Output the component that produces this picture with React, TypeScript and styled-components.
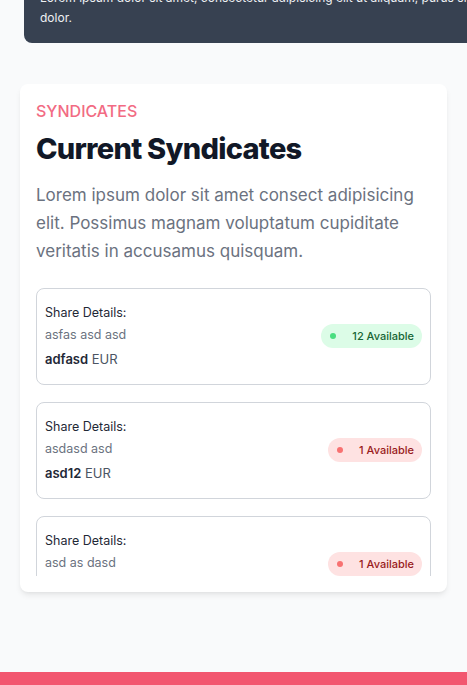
import React from "react";
import styled, { createGlobalStyle } from "styled-components";

const GlobalStyle = createGlobalStyle`
  html, body {
    margin: 0;
    padding: 0;
    background: #f9fafb;
    font-family: Inter, "Noto Sans", sans-serif;
    overflow: hidden;
  }
  * { box-sizing: border-box; }
`;

const Page = styled.div`
  width: 467px;
  min-height: 685px;
  overflow: hidden;
  display: flex;
  flex-direction: column;
`;

const HeroWrap = styled.div`
  padding-left: 24px;
  margin-top: -28px;
  overflow: hidden;
`;

const HeroBox = styled.div`
  width: 552px;
  background: #374151;
  border-radius: 8px;
  padding: 16px 16px 15px 16px;
  color: #eef0f3;
  font-size: 12px;
  line-height: 20px;
`;

const Section = styled.section`
  padding: 41px 20px 80px 20px;
`;

const Card = styled.div`
  background: #ffffff;
  border-radius: 8px;
  box-shadow: 0 4px 6px -1px rgba(0, 0, 0, 0.08), 0 2px 4px -2px rgba(0, 0, 0, 0.06);
  padding: 15px 16px 16px 16px;
`;

const Eyebrow = styled.div`
  color: #f26b83;
  font-size: 16px;
  line-height: 24px;
  font-weight: 500;
  text-transform: uppercase;
`;

const Title = styled.h2`
  margin: 8px 0 0 0;
  color: #111827;
  font-size: 29px;
  line-height: 36px;
  font-weight: 800;
  letter-spacing: -0.025em;
`;

const Lead = styled.p`
  margin: 14px 0 0 0;
  color: #6b7280;
  font-size: 17px;
  line-height: 28px;
`;

const List = styled.div`
  margin-top: 23px;
  height: 288px;
  overflow: hidden;
  display: flex;
  flex-direction: column;
  gap: 17px;
`;

const Item = styled.div`
  flex-shrink: 0;
  border: 1px solid #d1d5db;
  border-radius: 8px;
  padding: 13px 8px 14px 8px;
  display: flex;
  align-items: center;
  justify-content: space-between;
`;

const Details = styled.div`
  display: flex;
  flex-direction: column;
  font-size: 12.5px;
  line-height: 22px;
`;

const Label = styled.div`
  color: #1f2937;
`;

const Sub = styled.div`
  color: #6b7280;
`;

const Price = styled.div`
  margin-top: 2px;
  color: #4b5563;
  font-size: 13px;
`;

const Amount = styled.span`
  color: #1f2937;
  font-weight: 600;
`;

const Badge = styled.span<{ $tone: "green" | "red" }>`
  display: inline-flex;
  align-items: center;
  gap: 16px;
  height: 24px;
  padding: 0 8px 0 9px;
  border-radius: 9999px;
  font-size: 11px;
  font-weight: 500;
  background: ${(p) => (p.$tone === "green" ? "#dcfce7" : "#fee2e2")};
  color: ${(p) => (p.$tone === "green" ? "#166534" : "#991b1b")};
`;

const Dot = styled.span<{ $tone: "green" | "red" }>`
  width: 6px;
  height: 6px;
  border-radius: 50%;
  background: ${(p) => (p.$tone === "green" ? "#4ade80" : "#f87171")};
`;

const Footer = styled.div`
  height: 40px;
  background: #f2566f;
`;

type Share = { sub: string; amount: string; available: number; tone: "green" | "red" };

const shares: Share[] = [
  { sub: "asfas asd asd", amount: "adfasd", available: 12, tone: "green" },
  { sub: "asdasd asd", amount: "asd12", available: 1, tone: "red" },
  { sub: "asd as dasd", amount: "asd", available: 1, tone: "red" },
];

export default function App() {
  return (
    <Page>
      <GlobalStyle />
      <HeroWrap>
        <HeroBox>
          Lorem ipsum dolor sit amet, consectetur adipisicing elit ut aliquam, purus sit amet lectus dolor.
        </HeroBox>
      </HeroWrap>
      <Section>
        <Card>
          <Eyebrow>Syndicates</Eyebrow>
          <Title>Current Syndicates</Title>
          <Lead>
            Lorem ipsum dolor sit amet consect adipisicing elit. Possimus magnam voluptatum cupiditate
            veritatis in accusamus quisquam.
          </Lead>
          <List>
            {shares.map((s, i) => (
              <Item key={i}>
                <Details>
                  <Label>Share Details:</Label>
                  <Sub>{s.sub}</Sub>
                  <Price>
                    <Amount>{s.amount}</Amount> EUR
                  </Price>
                </Details>
                <Badge $tone={s.tone}>
                  <Dot $tone={s.tone} />
                  {s.available} Available
                </Badge>
              </Item>
            ))}
          </List>
        </Card>
      </Section>
      <Footer />
    </Page>
  );
}
